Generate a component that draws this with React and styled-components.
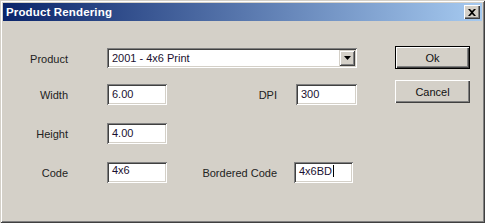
import React from "react";
import styled, { createGlobalStyle } from "styled-components";

const Global = createGlobalStyle`
  html, body { margin: 0; padding: 0; background: #d4d0c8; }
  body { font-family: "Liberation Sans", Arial, sans-serif; }
`;

const face = "#d4d0c8";

const Window = styled.div`
  width: 485px;
  height: 223px;
  box-sizing: border-box;
  padding: 3px 3px 0 3px;
  background: ${face};
  box-shadow: inset 1px 1px ${face}, inset -1px -1px #404040, inset 2px 2px #fff, inset -2px -2px #808080;
  display: flex;
  flex-direction: column;
  font-family: "Liberation Sans", Arial, sans-serif;
  font-size: 11px;
  color: #000;
`;

const TitleBar = styled.div`
  height: 18px;
  display: flex;
  align-items: center;
  justify-content: space-between;
  padding: 0 2px 0 3px;
  background: linear-gradient(to right, #0a246a, #a6caf0);
`;

const Title = styled.span`
  color: #fff;
  font-weight: bold;
  font-size: 11.5px;
  letter-spacing: 0.15px;
`;

const CloseBtn = styled.div`
  width: 16px;
  height: 14px;
  box-sizing: border-box;
  background: ${face};
  box-shadow: inset 1px 1px #fff, inset -1px -1px #404040, inset -2px -2px #808080;
  display: flex;
  align-items: center;
  justify-content: center;
`;

const Body = styled.div`
  display: flex;
  align-items: flex-start;
`;

const Form = styled.div`
  display: grid;
  grid-template-columns: 65px 39px 60px 110px 18px 62px;
  grid-template-rows: 18px 21px 21px 21px;
  row-gap: 18px;
  padding-top: 27px;
`;

const Label = styled.div`
  grid-column: ${(p) => p.col};
  grid-row: ${(p) => p.row};
  justify-self: end;
  align-self: center;
  color: #222;
  font-size: 11px;
  white-space: nowrap;
  margin-top: ${(p) => p.dy || 0}px;
`;

const Field = styled.div`
  grid-column: ${(p) => p.col};
  grid-row: ${(p) => p.row};
  width: ${(p) => p.w || 60}px;
  margin-left: ${(p) => p.dx || 0}px;
  height: 21px;
  box-sizing: border-box;
  background: #fff;
  box-shadow: inset 1px 1px #808080, inset -1px -1px #fff, inset 2px 2px #404040, inset -2px -2px ${face};
  padding: ${(p) => p.pt || 4}px 4px 0 5px;
  font-size: 11px;
  color: #1a1030;
  white-space: nowrap;
  display: flex;
  align-items: flex-start;
`;

const Caret = styled.span`
  display: inline-block;
  width: 1px;
  height: 12px;
  background: #000;
  margin-left: 1px;
`;

const Combo = styled.div`
  grid-column: 3 / 7;
  grid-row: 1;
  height: 20px;
  width: 250px;
  box-sizing: border-box;
  background: #fff;
  box-shadow: inset 1px 1px #808080, inset -1px -1px #fff, inset 2px 2px #404040, inset -2px -2px ${face};
  display: flex;
  align-items: center;
  justify-content: space-between;
  padding: 0 2px 0 5px;
  color: #1a1030;
`;

const ArrowBtn = styled.div`
  width: 16px;
  height: 16px;
  box-sizing: border-box;
  background: ${face};
  box-shadow: inset 1px 1px ${face}, inset -1px -1px #404040, inset 2px 2px #fff, inset -2px -2px #808080;
  display: flex;
  align-items: center;
  justify-content: center;
`;

const Buttons = styled.div`
  display: flex;
  flex-direction: column;
  gap: 11px;
  margin-left: 38px;
  padding-top: 25px;
`;

const Button = styled.div`
  width: 75px;
  height: 23px;
  box-sizing: border-box;
  background: ${face};
  display: flex;
  align-items: center;
  justify-content: center;
  font-size: 11px;
  color: #111;
  box-shadow: ${(p) =>
    p.primary
      ? `inset 1px 1px #000, inset -1px -1px #000, inset 2px 2px #fff, inset -2px -2px #404040, inset -3px -3px #808080`
      : `inset 1px 1px #fff, inset -1px -1px #404040, inset -2px -2px #808080`};
`;

export default function App() {
  return (
    <>
      <Global />
      <Window>
        <TitleBar>
          <Title>Product Rendering</Title>
          <CloseBtn>
            <svg width="8" height="7" viewBox="0 0 8 7">
              <path d="M0 0h2l2 2 2-2h2L5 3.5 8 7H6L4 5 2 7H0l3-3.5z" fill="#000" />
            </svg>
          </CloseBtn>
        </TitleBar>
        <Body>
          <Form>
            <Label col={1} row={1} dy={3}>Product</Label>
            <Combo>
              <span>2001 - 4x6 Print</span>
              <ArrowBtn>
                <svg width="7" height="4" viewBox="0 0 7 4">
                  <path d="M0 0h7L3.5 4z" fill="#000" />
                </svg>
              </ArrowBtn>
            </Combo>

            <Label col={1} row={2}>Width</Label>
            <Field col={3} row={2}>6.00</Field>
            <Label col={4} row={2}>DPI</Label>
            <Field col={6} row={2} dx={1} w={61}>300</Field>

            <Label col={1} row={3}>Height</Label>
            <Field col={3} row={3}>4.00</Field>

            <Label col={1} row={4}>Code</Label>
            <Field col={3} row={4} pt={2}>4x6</Field>
            <Label col={4} row={4}>Bordered Code</Label>
            <Field col={6} row={4} pt={3} dx={-1} w={59}>
              4x6BD<Caret />
            </Field>
          </Form>
          <Buttons>
            <Button primary>Ok</Button>
            <Button>Cancel</Button>
          </Buttons>
        </Body>
      </Window>
    </>
  );
}
